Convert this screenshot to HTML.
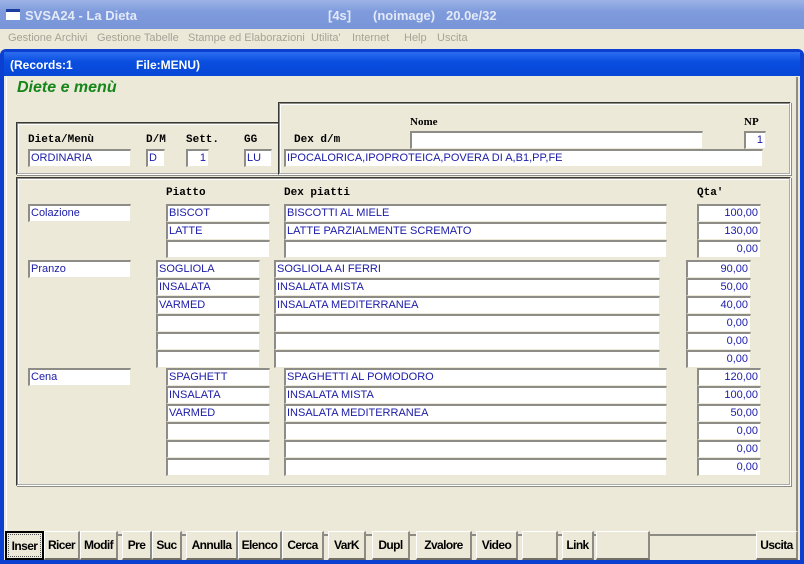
<!DOCTYPE html>
<html><head><meta charset="utf-8"><style>
*{margin:0;padding:0;box-sizing:border-box}
body{width:804px;height:564px;overflow:hidden;background:#ece9d8;position:relative;font-family:"Liberation Sans",sans-serif}
.a{position:absolute}
.tb{left:0;top:0;width:804px;height:29px;background:linear-gradient(#9db3e6,#7f9bdc 40%,#7895d8);color:#e3e9f7;font-weight:bold;font-size:13px}
.mb{left:0;top:29px;width:804px;height:20px;background:#ece9d8;color:#a5a397;font-size:11px}
.win{left:0;top:49px;width:804px;height:515px;background:#0a3fd0;border-radius:6px 6px 0 0}
.it{left:4px;top:52px;width:796px;height:24px;background:linear-gradient(#2c6cf0,#0a4fe0 40%,#0746d6);color:#fff;font-weight:bold;font-size:12px}
.body{left:4px;top:76px;width:796px;height:484px;background:#ece9d8}
.gb{border:2px groove #f6f5ef;border-color:#8c8c85 #fff #fff #8c8c85;box-shadow:inset 1px 1px 0 #fff, 1px 1px 0 #8c8c85}
.f{position:absolute;height:18px;background:#fff;border-top:2px solid #8d8c86;border-left:2px solid #8d8c86;border-right:1px solid #ece9d8;border-bottom:1px solid #ece9d8;color:#1b1ba8;font-size:11px;line-height:15px;padding-left:1px;white-space:nowrap;overflow:hidden}
.r{text-align:right;padding-right:2px}
.l{position:absolute;font-family:"Liberation Mono",monospace;font-weight:bold;font-size:11px;color:#000}
.b{position:absolute;top:531px;height:29px;background:#ece9d8;border-top:1px solid #fff;border-left:1px solid #fff;border-right:2px solid #8c8c85;border-bottom:2px solid #716f64;font-weight:bold;font-size:12px;letter-spacing:-0.6px;text-align:center;line-height:27px;color:#000}
</style></head><body>
<div class="a tb"><div class="a" style="left:6px;top:9px;width:14px;height:11px;background:#fff;border-top:3px solid #1c3ea0"></div><span class="a" style="left:25px;top:8px">SVSA24 - La Dieta</span><span class="a" style="left:328px;top:8px">[4s]</span><span class="a" style="left:373px;top:8px">(noimage)</span><span class="a" style="left:446px;top:8px">20.0e/32</span></div>
<div class="a mb"><span class="a" style="left:8px;top:3px">Gestione Archivi</span><span class="a" style="left:97px;top:3px">Gestione Tabelle</span><span class="a" style="left:188px;top:3px">Stampe ed Elaborazioni</span><span class="a" style="left:311px;top:3px">Utilita'</span><span class="a" style="left:352px;top:3px">Internet</span><span class="a" style="left:404px;top:3px">Help</span><span class="a" style="left:437px;top:3px">Uscita</span></div>
<div class="a win"></div>
<div class="a it"><span class="a" style="left:6px;top:6px">(Records:1</span><span class="a" style="left:132px;top:6px">File:MENU)</span></div>
<div class="a body"></div>
<div class="a" style="left:6px;top:77px;width:792px;height:459px;border-left:1px solid #fff;border-right:2px solid #8c8c85;border-bottom:2px solid #8c8c85"></div>
<div class="a" style="left:17px;top:79px;color:#14861a;font-weight:bold;font-style:italic;font-size:16px">Diete e menù</div>
<div class="a gb" style="left:16px;top:122px;width:264px;height:53px;border-right:none"></div>
<div class="a gb" style="left:278px;top:102px;width:513px;height:73px"></div>
<div class="a gb" style="left:16px;top:177px;width:775px;height:309px"></div>
<span class="l" style="left:28px;top:134px">Dieta/Menù</span><span class="l" style="left:146px;top:134px">D/M</span><span class="l" style="left:186px;top:134px">Sett.</span><span class="l" style="left:244px;top:134px">GG</span><span class="l" style="left:294px;top:134px">Dex d/m</span>
<span class="l" style="left:410px;top:116px;font-family:'Liberation Serif',serif">Nome</span><span class="l" style="left:744px;top:116px;font-family:'Liberation Serif',serif">NP</span>
<div class="f" style="left:28px;top:149px;width:103px">ORDINARIA</div>
<div class="f" style="left:146px;top:149px;width:19px">D</div>
<div class="f r" style="left:186px;top:149px;width:23px">1</div>
<div class="f" style="left:244px;top:149px;width:28px">LU</div>
<div class="f" style="left:410px;top:131px;width:293px"></div>
<div class="f r" style="left:744px;top:131px;width:22px">1</div>
<div class="f" style="left:284px;top:149px;width:479px">IPOCALORICA,IPOPROTEICA,POVERA DI A,B1,PP,FE</div>
<span class="l" style="left:166px;top:187px">Piatto</span><span class="l" style="left:284px;top:187px">Dex piatti</span><span class="l" style="left:697px;top:187px">Qta'</span>
<div class="f" style="left:28px;top:204px;width:103px">Colazione</div>
<div class="f" style="left:166px;top:204px;width:104px">BISCOT</div><div class="f" style="left:284px;top:204px;width:383px">BISCOTTI AL MIELE</div><div class="f r" style="left:697px;top:204px;width:64px">100,00</div>
<div class="f" style="left:166px;top:222px;width:104px">LATTE</div><div class="f" style="left:284px;top:222px;width:383px">LATTE PARZIALMENTE SCREMATO</div><div class="f r" style="left:697px;top:222px;width:64px">130,00</div>
<div class="f" style="left:166px;top:240px;width:104px"></div><div class="f" style="left:284px;top:240px;width:383px"></div><div class="f r" style="left:697px;top:240px;width:64px">0,00</div>
<div class="f" style="left:28px;top:260px;width:103px">Pranzo</div>
<div class="f" style="left:156px;top:260px;width:104px">SOGLIOLA</div><div class="f" style="left:274px;top:260px;width:386px">SOGLIOLA AI FERRI</div><div class="f r" style="left:686px;top:260px;width:65px">90,00</div>
<div class="f" style="left:156px;top:278px;width:104px">INSALATA</div><div class="f" style="left:274px;top:278px;width:386px">INSALATA MISTA</div><div class="f r" style="left:686px;top:278px;width:65px">50,00</div>
<div class="f" style="left:156px;top:296px;width:104px">VARMED</div><div class="f" style="left:274px;top:296px;width:386px">INSALATA MEDITERRANEA</div><div class="f r" style="left:686px;top:296px;width:65px">40,00</div>
<div class="f" style="left:156px;top:314px;width:104px"></div><div class="f" style="left:274px;top:314px;width:386px"></div><div class="f r" style="left:686px;top:314px;width:65px">0,00</div>
<div class="f" style="left:156px;top:332px;width:104px"></div><div class="f" style="left:274px;top:332px;width:386px"></div><div class="f r" style="left:686px;top:332px;width:65px">0,00</div>
<div class="f" style="left:156px;top:350px;width:104px"></div><div class="f" style="left:274px;top:350px;width:386px"></div><div class="f r" style="left:686px;top:350px;width:65px">0,00</div>
<div class="f" style="left:28px;top:368px;width:103px">Cena</div>
<div class="f" style="left:166px;top:368px;width:104px">SPAGHETT</div><div class="f" style="left:284px;top:368px;width:383px">SPAGHETTI AL POMODORO</div><div class="f r" style="left:697px;top:368px;width:64px">120,00</div>
<div class="f" style="left:166px;top:386px;width:104px">INSALATA</div><div class="f" style="left:284px;top:386px;width:383px">INSALATA MISTA</div><div class="f r" style="left:697px;top:386px;width:64px">100,00</div>
<div class="f" style="left:166px;top:404px;width:104px">VARMED</div><div class="f" style="left:284px;top:404px;width:383px">INSALATA MEDITERRANEA</div><div class="f r" style="left:697px;top:404px;width:64px">50,00</div>
<div class="f" style="left:166px;top:422px;width:104px"></div><div class="f" style="left:284px;top:422px;width:383px"></div><div class="f r" style="left:697px;top:422px;width:64px">0,00</div>
<div class="f" style="left:166px;top:440px;width:104px"></div><div class="f" style="left:284px;top:440px;width:383px"></div><div class="f r" style="left:697px;top:440px;width:64px">0,00</div>
<div class="f" style="left:166px;top:458px;width:104px"></div><div class="f" style="left:284px;top:458px;width:383px"></div><div class="f r" style="left:697px;top:458px;width:64px">0,00</div>
<div class="b" style="left:5px;width:39px;border:2px solid #000;outline:1px dotted #555;outline-offset:-4px">Inser</div>
<div class="b" style="left:44px;width:36px">Ricer</div>
<div class="b" style="left:80px;width:38px">Modif</div>
<div class="b" style="left:122px;width:30px">Pre</div>
<div class="b" style="left:152px;width:30px">Suc</div>
<div class="b" style="left:186px;width:52px">Annulla</div>
<div class="b" style="left:238px;width:44px">Elenco</div>
<div class="b" style="left:282px;width:42px">Cerca</div>
<div class="b" style="left:328px;width:38px">VarK</div>
<div class="b" style="left:372px;width:38px">Dupl</div>
<div class="b" style="left:416px;width:56px">Zvalore</div>
<div class="b" style="left:476px;width:42px">Video</div>
<div class="b" style="left:522px;width:36px"></div>
<div class="b" style="left:562px;width:32px">Link</div>
<div class="b" style="left:596px;width:54px"></div>
<div class="b" style="left:756px;width:42px">Uscita</div>
</body></html>
